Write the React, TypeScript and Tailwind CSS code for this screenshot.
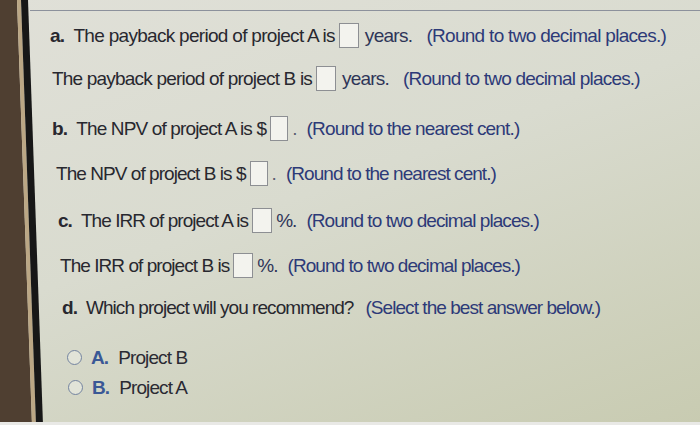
import React from 'react';

const font = { fontFamily: '"Liberation Sans", Arial, sans-serif' };

function Box({ w = 'w-[20px]' }: { w?: string }) {
  return <span className={`inline-block ${w} h-[25px] mx-[4px] bg-[#f3f3ee] border border-[#8d8f93] align-middle`} />;
}

function Hint({ children }: { children: React.ReactNode }) {
  return <span className="text-[#2d3a78]">{children}</span>;
}

function Radio({ letter, label, pl }: { letter: string; label: string; pl: string }) {
  return (
    <div className={`flex items-center h-[26px] tracking-[-0.9px] ${pl}`}>
      <span className="w-[15px] h-[15px] rounded-full border-[1.5px] border-[#73839f] bg-[#e2e4d8]" />
      <span className="ml-[9px] font-bold text-[#3a5896]">{letter}</span>
      <span className="ml-[10px] text-[#2a2a33]">{label}</span>
    </div>
  );
}

export default function App() {
  return (
    <div
      className="relative w-[700px] h-[425px] overflow-hidden bg-[linear-gradient(160deg,#e0e0d8_0%,#d9dbcf_45%,#c8cbb1_100%)]"
      style={font}
    >
      {/* monitor bezel on the left, slanted by the camera */}
      <div className="absolute inset-0 bg-[#4f3f31] [clip-path:polygon(0_0,17px_0,32px_100%,0_100%)]" />
      <div className="absolute inset-0 bg-[#bba785] [clip-path:polygon(17px_0,21px_0,36px_100%,32px_100%)]" />
      <div className="absolute inset-0 bg-[#171717] [clip-path:polygon(21px_0,28px_0,43px_100%,36px_100%)]" />

      <div className="relative flex flex-col text-[19px] text-[#28282f] leading-none">
        <div className="h-px mt-[10px] ml-[30px] bg-[#8c919c]" />

        <div className="flex items-center h-[26px] mt-[11px] pl-[50px] tracking-[-0.7px]">
          <span className="font-bold">a.</span>
          <span className="ml-[9px]">The payback period of project A is</span>
          <Box />
          <span className="ml-[2px] text-[#2f3558]">years.</span>
          <span className="ml-[14px]"><Hint>(Round to two decimal places.)</Hint></span>
        </div>

        <div className="flex items-center h-[26px] mt-[17px] pl-[52px] tracking-[-0.8px]">
          <span>The payback period of project B is</span>
          <Box />
          <span className="ml-[2px] text-[#2f3558]">years.</span>
          <span className="ml-[14px]"><Hint>(Round to two decimal places.)</Hint></span>
        </div>

        <div className="flex items-center h-[26px] mt-[24px] pl-[52px] tracking-[-0.85px]">
          <span className="font-bold">b.</span>
          <span className="ml-[9px]">The NPV of project A is $</span>
          <Box w="w-[18px]" />
          <span className="text-[#5a5f70]">.</span>
          <span className="ml-[10px]"><Hint>(Round to the nearest cent.)</Hint></span>
        </div>

        <div className="flex items-center h-[26px] mt-[19px] pl-[56px] tracking-[-0.95px]">
          <span>The NPV of project B is $</span>
          <Box w="w-[18px]" />
          <span className="text-[#5a5f70]">.</span>
          <span className="ml-[10px]"><Hint>(Round to the nearest cent.)</Hint></span>
        </div>

        <div className="flex items-center h-[26px] mt-[21px] pl-[58px] tracking-[-0.95px]">
          <span className="font-bold">c.</span>
          <span className="ml-[9px]">The IRR of project A is</span>
          <Box />
          <span className="text-[#2f3558]">%.</span>
          <span className="ml-[10px]"><Hint>(Round to two decimal places.)</Hint></span>
        </div>

        <div className="flex items-center h-[26px] mt-[19px] pl-[60px] tracking-[-0.95px]">
          <span>The IRR of project B is</span>
          <Box />
          <span className="text-[#2f3558]">%.</span>
          <span className="ml-[10px]"><Hint>(Round to two decimal places.)</Hint></span>
        </div>

        <div className="flex items-center h-[26px] mt-[16px] pl-[62px] tracking-[-0.95px]">
          <span className="font-bold">d.</span>
          <span className="ml-[9px]">Which project will you recommend?</span>
          <span className="ml-[12px]"><Hint>(Select the best answer below.)</Hint></span>
        </div>

        <div className="mt-[24px]">
          <Radio letter="A." label="Project B" pl="pl-[67px]" />
        </div>
        <div className="mt-[4px]">
          <Radio letter="B." label="Project A" pl="pl-[68px]" />
        </div>
      </div>

      <div className="absolute left-0 right-0 bottom-0 h-[3px] bg-[#e9e9e6]" />
    </div>
  );
}
